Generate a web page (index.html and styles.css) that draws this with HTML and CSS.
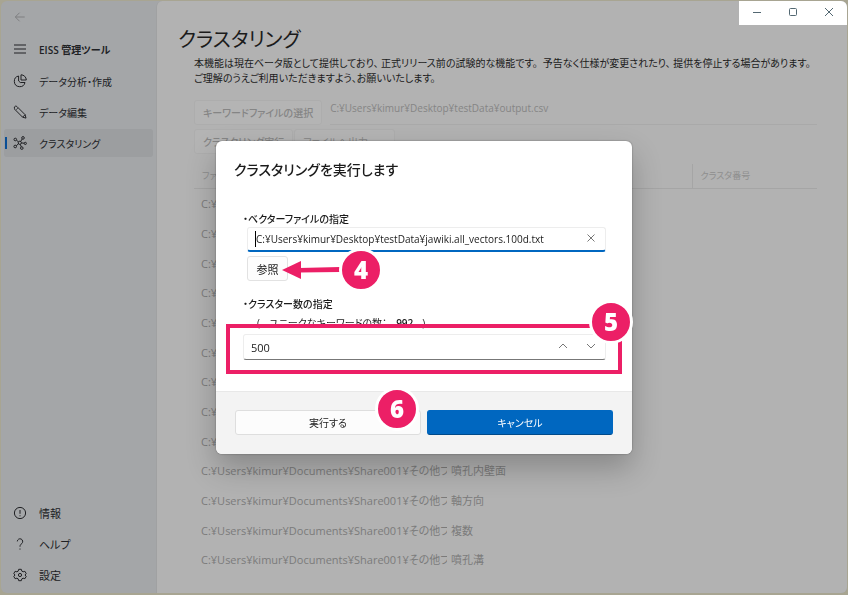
FILE: index.html
```html
<!DOCTYPE html>
<html lang="ja">
<head>
<meta charset="utf-8">
<meta name="viewport" content="width=device-width, initial-scale=1">
<title>EISS 管理ツール</title>
<link rel="stylesheet" href="styles.css">
</head>
<body>
<div class="window">
  <nav class="sidebar" aria-label="メニュー">
    <button class="back" type="button" aria-label="戻る"><svg class="icon" viewBox="0 0 14 14"><path d="M12.500 7H2M6.500 2 1.500 7l5 5"/></svg></button>
    <button class="nav-item nav-title" type="button">
      <svg class="icon" viewBox="0 0 14 14"><path d="M1 3h12M1 7h12M1 11h12"/></svg>EISS 管理ツール</button>
    <a class="nav-item" href="#analysis">
      <svg class="icon" viewBox="0 0 14 14"><path d="M5.600 2A5.400 5.400 0 1 0 12 8.500H7.300L5.600 7z"/><path d="M8 .8V6h5.300A5.300 5.300 0 0 0 8 .8z"/></svg>データ分析・作成</a>
    <a class="nav-item" href="#edit">
      <svg class="icon" viewBox="0 0 14 14"><path d="M1.500 3.700Q.8 1.600 2.300 1.200q1-.2 1.800.5l8 8 .9 3.400-3.400-.9-8-8zM3.400 4.500l1.300-1.200M9.600 12.200l2.500-2.500"/></svg>データ編集</a>
    <a class="nav-item nav-active" href="#cluster" aria-current="page">
      <svg class="icon" viewBox="0 0 14 14"><circle cx="6.800" cy="6.800" r="1.600"/><circle cx="2.300" cy="3.500" r="1.300"/><circle cx="10" cy="1.900" r="1.300"/><circle cx="2.200" cy="10.500" r="1.300"/><circle cx="12.300" cy="7.400" r="1.100"/><circle cx="8.800" cy="12.100" r="1.300"/><path d="M3.500 4.300l2 1.500M9.200 3 7.700 5.400M3.300 9.700l2.200-1.900M8.400 6.900l2.800.3M7.300 8.400l1 2.500"/></svg>クラスタリング</a>
    <div class="nav-bottom">
      <a class="nav-item" href="#info">
        <svg class="icon" viewBox="0 0 14 14"><circle cx="7" cy="7" r="5.600"/><path d="M7 4v3.800M7 9.300v1"/></svg>情報</a>
      <a class="nav-item" href="#help">
        <svg class="icon" viewBox="0 0 14 14"><path d="M4.300 4.400a2.700 2.700 0 1 1 4.500 2.100C7.700 7.500 7 8 7 9.700M7 11.500v1.100"/></svg>ヘルプ</a>
      <a class="nav-item" href="#settings">
        <svg class="icon" viewBox="0 0 14 14"><path d="M5.700 1.300h2.600l.5 1.800 1.300.7 1.800-.5 1.300 2.300L12 7l1.200 1.400-1.300 2.300-1.800-.5-1.300.7-.5 1.800H5.700l-.5-1.800-1.300-.7-1.800.5L.8 8.400 2 7 .8 5.600l1.300-2.300 1.800.5 1.300-.7z"/><circle cx="7" cy="7" r="1.600"/></svg>設定</a>
    </div>
  </nav>
  <main class="main">
    <h1>クラスタリング</h1>
    <p class="lead">本機能は現在ベータ版として提供しており、 正式リリース前の試験的な機能です。 &nbsp;予告なく仕様が変更されたり、 提供を停止する場合があります。<br>ご理解のうえご利用いただきますよう、お願いいたします。</p>
    <div class="file-row">
      <button class="tool" type="button" disabled>キーワードファイルの選択</button>
      <input class="file-path" type="text" aria-label="キーワードファイル" value="C:¥Users¥kimur¥Desktop¥testData¥output.csv" disabled>
    </div>
    <div class="tool-row">
      <button class="tool" type="button" disabled>クラスタリング実行</button>
      <button class="tool tool-light" type="button" disabled>ファイルへ出力</button>
    </div>
    <table class="results">
      <thead><tr><th class="col-file">ファイル</th><th></th><th class="col-cluster">クラスタ番号</th></tr></thead>
      <tbody>
        <tr><td>C:¥Users¥kimur¥Documents¥Share001¥その他フ</td><td></td><td></td></tr>
        <tr><td>C:¥Users¥kimur¥Documents¥Share001¥その他フ</td><td></td><td></td></tr>
        <tr><td>C:¥Users¥kimur¥Documents¥Share001¥その他フ</td><td></td><td></td></tr>
        <tr><td>C:¥Users¥kimur¥Documents¥Share001¥その他フ</td><td></td><td></td></tr>
        <tr><td>C:¥Users¥kimur¥Documents¥Share001¥その他フ</td><td></td><td></td></tr>
        <tr><td>C:¥Users¥kimur¥Documents¥Share001¥その他フ</td><td></td><td></td></tr>
        <tr><td>C:¥Users¥kimur¥Documents¥Share001¥その他フ</td><td></td><td></td></tr>
        <tr><td>C:¥Users¥kimur¥Documents¥Share001¥その他フ</td><td></td><td></td></tr>
        <tr><td>C:¥Users¥kimur¥Documents¥Share001¥その他フ</td><td></td><td></td></tr>
        <tr><td>C:¥Users¥kimur¥Documents¥Share001¥その他フ</td><td>噴孔内壁面</td><td></td></tr>
        <tr><td>C:¥Users¥kimur¥Documents¥Share001¥その他フ</td><td>軸方向</td><td></td></tr>
        <tr><td>C:¥Users¥kimur¥Documents¥Share001¥その他フ</td><td>複数</td><td></td></tr>
        <tr><td>C:¥Users¥kimur¥Documents¥Share001¥その他フ</td><td>噴孔溝</td><td></td></tr>
      </tbody>
    </table>
  </main>
  <div class="caption-buttons">
    <button type="button" aria-label="最小化"><svg viewBox="0 0 10 10"><path d="M1 5.500h8"/></svg></button>
    <button type="button" aria-label="最大化"><svg viewBox="0 0 10 10"><rect x="1.500" y="1.500" width="7" height="7" rx="1"/></svg></button>
    <button type="button" aria-label="閉じる"><svg viewBox="0 0 10 10"><path d="M1 1l8 8M9 1 1 9"/></svg></button>
  </div>
</div>

<div class="overlay">
  <section class="dialog" role="dialog" aria-modal="true" aria-labelledby="dialog-title">
    <div class="dialog-body">
      <h2 id="dialog-title">クラスタリングを実行します</h2>
      <label class="field-label" for="vector">・ベクターファイルの指定</label>
      <div class="field field-focus">
        <span class="caret"></span>
        <input id="vector" type="text" value="C:¥Users¥kimur¥Desktop¥testData¥jawiki.all_vectors.100d.txt">
        <button class="mini" type="button" aria-label="クリア"><svg viewBox="0 0 10 10"><path d="M1.500 1.500l7 7M8.500 1.500l-7 7"/></svg></button>
      </div>
      <button class="browse" type="button">参照</button>
      <label class="field-label" for="clusters">・クラスター数の指定</label>
      <p class="hint"><span>(</span><span>ユニークなキーワードの数：</span><b>992</b><span>)</span></p>
      <div class="field field-number">
        <input id="clusters" type="text" inputmode="numeric" value="500">
        <button class="mini" type="button" aria-label="増やす"><svg viewBox="0 0 10 10"><path d="M1 7l4-4 4 4"/></svg></button>
        <button class="mini" type="button" aria-label="減らす"><svg viewBox="0 0 10 10"><path d="M1 3l4 4 4-4"/></svg></button>
      </div>
    </div>
    <div class="dialog-footer">
      <button class="action" type="button">実行する</button>
      <button class="action action-primary" type="button">キャンセル</button>
    </div>
    <svg class="arrow" viewBox="0 0 60 18"><path d="M0 9 19 0v18z"/><path d="M17 7 58 6v5l-41 .500z"/></svg>
    <div class="highlight"></div>
    <span class="badge badge-4">4</span>
    <span class="badge badge-5">5</span>
    <span class="badge badge-6">6</span>
  </section>
</div>
</body>
</html>
```
FILE: styles.css
```css
* {
  box-sizing: border-box;
}

body {
  margin: 0;
  background: #a8a592;
  color: #1b1b1b;
  font-family: "Open Sans", "Noto Sans CJK JP", sans-serif;
  font-size: 10px;
  font-feature-settings: "palt";
}

button,
input {
  margin: 0;
  padding: 0;
  border: 0;
  background: none;
  color: inherit;
  font: inherit;
  font-feature-settings: inherit;
}

svg {
  fill: none;
  stroke: currentColor;
  stroke-width: 1;
}

.window {
  position: relative;
  display: flex;
  height: calc(100vh - 3px);
  margin: 1px 1px 2px 1px;
  overflow: hidden;
  border-radius: 6px;
  background: #a4a6a8;
}

.sidebar {
  display: flex;
  flex: none;
  flex-direction: column;
  gap: 3px;
  width: 155px;
  padding: 4px 3px 4px 3px;
}

.back {
  width: 32px;
  height: 27px;
  color: #77797b;
}

.icon {
  width: 14px;
  height: 14px;
}

.back .icon {
  width: 12px;
  height: 12px;
}

.nav-item {
  display: flex;
  align-items: center;
  gap: 12px;
  height: 28px;
  padding-left: 9px;
  border-radius: 3px;
  color: #202124;
  text-decoration: none;
  white-space: nowrap;
}

.nav-title {
  margin-bottom: 1px;
  font-weight: 600;
}

.nav-active {
  background: linear-gradient(#0a4f96, #0a4f96) 1px 50% / 2px 12px no-repeat #9c9ea0;
}

.nav-bottom {
  display: flex;
  flex-direction: column;
  gap: 3px;
  margin-top: auto;
  font-size: 11px;
}

.main {
  flex: 1;
  min-width: 0;
  padding: 22px 30px 0 37px;
  border-left: 1px solid #a0a1a2;
  border-top-left-radius: 6px;
  background: #b2b2b2;
}

h1 {
  margin: 0 0 0 -16px;
  font-size: 20px;
  font-weight: 400;
  line-height: 33px;
}

.lead {
  margin: 0;
  line-height: 15px;
  white-space: nowrap;
}

.file-row,
.tool-row {
  display: flex;
  gap: 8px;
}

.file-row {
  margin-top: 14px;
}

.tool-row {
  gap: 1px;
  margin-top: 4px;
}

.tool {
  height: 25px;
  padding: 0 8px;
  border: 1px solid #adadad;
  border-radius: 3px;
  background: #b4b4b4;
  color: #858585;
  font-weight: 500;
}

.tool-light {
  padding-right: 26px;
  font-weight: 400;
}

.file-path {
  flex: 1;
  height: 25px;
  padding-bottom: 9px;
  border-bottom: 1px solid #a9a9a9;
  color: #858585;
}

.results {
  width: 100%;
  margin-top: 10px;
  border-collapse: collapse;
  table-layout: fixed;
  color: #7b7b7b;
  font-size: 11px;
}

.results th {
  height: 24px;
  padding: 0 8px;
  border-bottom: 1px solid #a5a5a5;
  color: #8e8e8e;
  font-size: 9px;
  font-weight: 400;
  text-align: left;
}

.results .col-file {
  width: 253px;
}

.results .col-cluster {
  width: 125px;
  border-left: 1px solid #a5a5a5;
}

.results td {
  height: 30px;
  padding: 0 0 0 4px;
  overflow: hidden;
  white-space: nowrap;
}

.results td:first-child {
  padding-left: 7px;
}

.results tr:nth-child(3n) td {
  height: 29px;
}

.caption-buttons {
  position: absolute;
  top: 0;
  right: 0;
  display: flex;
  background: #fff;
  color: #536872;
}

.caption-buttons button {
  width: 36px;
  height: 24px;
}

.caption-buttons svg {
  width: 10px;
  height: 10px;
}

.overlay {
  position: fixed;
  inset: 0;
  display: grid;
  place-items: center;
}

.dialog {
  position: relative;
  width: 416px;
  border-radius: 6px;
  background: #fff;
  box-shadow: 0 0 2px #0006, 0 14px 30px #0000003d;
}

.dialog-body {
  padding: 16px 26px 31px 27px;
}

h2 {
  margin: 0 0 29px -9px;
  font-size: 14px;
  font-weight: 500;
  line-height: 26px;
}

.field-label {
  display: block;
  font-weight: 500;
  line-height: 15px;
}

.field {
  display: flex;
  align-items: center;
  height: 25px;
  border: 1px solid #ededed;
  border-radius: 3px;
  background: #fff;
}

.field-focus {
  margin-left: 4px;
  padding-left: 7px;
  border-bottom: 2px solid #0067c0;
}

.field-number {
  height: 26px;
  padding-left: 7px;
  border-bottom: 1px solid #777;
}

.caret {
  width: 1px;
  height: 16px;
  background: #000;
}

.field input {
  flex: 1;
  min-width: 0;
}

.field-number input {
  font-size: 11px;
}

.mini {
  width: 28px;
  height: 22px;
  color: #777;
}

.mini svg {
  width: 10px;
  height: 10px;
}

.browse {
  display: block;
  width: 41px;
  height: 25px;
  margin: 4px 0 16px 4px;
  border: 1px solid #e2e2e2;
  border-radius: 3px;
  background: #fdfdfd;
  font-size: 11px;
}

.hint {
  display: flex;
  gap: 9px;
  height: 22px;
  margin: 0;
  padding: 3px 0 0 14px;
  line-height: 16px;
}

.hint b {
  font-weight: 600;
}

.dialog-footer {
  display: grid;
  grid-template-columns: 1fr 1fr;
  gap: 6px;
  padding: 18px 19px 19px;
  border-top: 1px solid #e8e8e8;
  border-radius: 0 0 6px 6px;
  background: #f3f3f3;
}

.action {
  height: 25px;
  border: 1px solid #dedede;
  border-radius: 3px;
  background: #fcfcfc;
}

.action-primary {
  border-color: #0067c0 #0067c0 #004a8a;
  background: #0067c0;
  color: #fff;
}

.arrow {
  position: absolute;
  top: 120px;
  left: 66px;
  width: 60px;
  height: 18px;
  fill: #ec1f66;
  stroke: none;
}

.highlight {
  position: absolute;
  top: 183px;
  left: 10px;
  width: 396px;
  height: 50px;
  border: 4px solid #ec1f66;
}

.badge {
  position: absolute;
  display: grid;
  place-items: center;
  width: 44px;
  height: 44px;
  border: 3px solid #fff;
  border-radius: 50%;
  background: #ec1f66;
  color: #fff;
  font-size: 24px;
  font-weight: 800;
  line-height: 38px;
}

.badge-4 {
  top: 107px;
  left: 123px;
}

.badge-5 {
  top: 159px;
  left: 373px;
}

.badge-6 {
  top: 246px;
  left: 159px;
}
```
